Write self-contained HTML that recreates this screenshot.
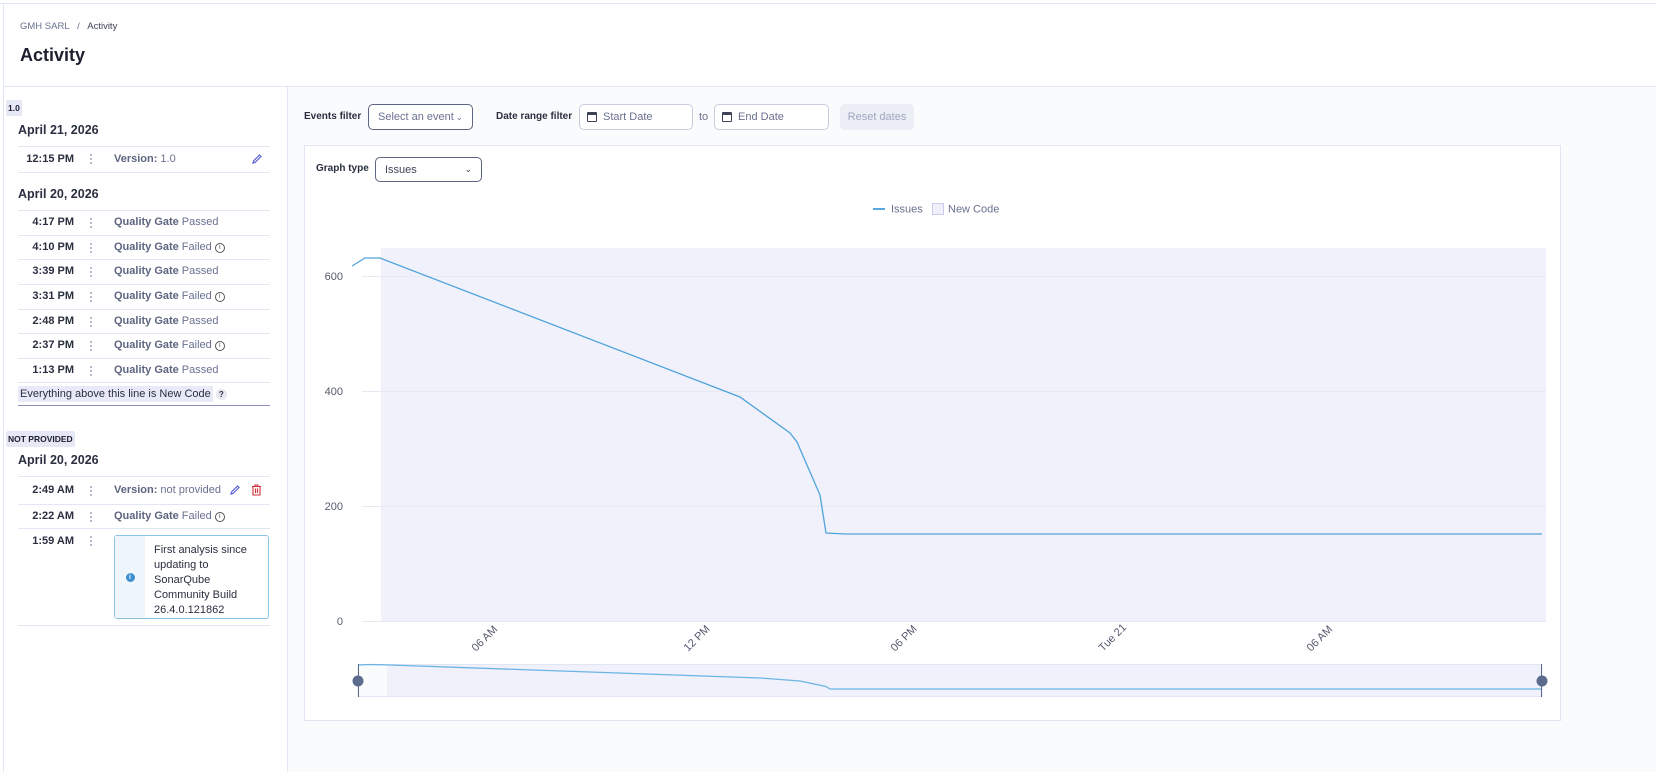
<!DOCTYPE html>
<html><head><meta charset="utf-8"><style>
*{box-sizing:border-box;margin:0;padding:0}
body{width:1656px;height:772px;overflow:hidden;background:#fff;font-family:"Liberation Sans",sans-serif;color:#3e4357;position:relative}
.topline{position:absolute;left:0;top:3px;width:1656px;height:1px;background:#e1e6f3}
.leftline{position:absolute;left:3px;top:3px;width:1px;height:769px;background:#e1e6f3}
.crumb{position:absolute;left:20px;top:21px;font-size:9.5px;color:#6a7190}
.crumb b{font-weight:normal;color:#3e4357}
h1{position:absolute;left:20px;top:45px;font-size:18px;font-weight:bold;color:#1c1f2e}
.hline{position:absolute;left:3px;top:86px;width:1653px;height:1px;background:#e1e6f3}
.right{position:absolute;left:287px;top:87px;width:1369px;height:685px;background:#fafbfc;border-left:1px solid #e1e6f3}
.tag{position:absolute;font-size:8.5px;font-weight:bold;background:#e6e8f5;color:#1c1f2e;padding:3px 2px;border-radius:2px}
.date{position:absolute;left:18px;font-size:12.5px;font-weight:bold;color:#2a2f40}
.row{position:absolute;left:18px;width:252px;height:25px;border-top:1px solid #e1e6f3;font-size:11px;line-height:13px}
.row .t{position:absolute;right:196px;top:5px;font-weight:bold;color:#2a2f40;white-space:nowrap}
.row .d{position:absolute;left:72px;top:6px;width:2px;height:12px;background:radial-gradient(circle,#a0a6c0 0.9px,transparent 1.1px) 0 0/2px 4px repeat-y}
.row .x{position:absolute;left:96px;top:5px;color:#6a7190;white-space:nowrap;display:flex;align-items:center}
.row .x b{color:#5d6580;margin-right:3px}
.ic{display:inline-block;width:10px;height:10px;border:1px solid #555;border-radius:50%;font-size:7px;text-align:center;line-height:8px;margin-left:3px;color:#555}
.lbl{position:absolute;font-size:10px;font-weight:bold;color:#2a2f40}
.sel{position:absolute;border:1px solid #5d6580;border-radius:5px;background:#fff;font-size:11px;color:#3e4357;padding:0 9px;display:flex;align-items:center;justify-content:space-between}
.inp{position:absolute;border:1px solid #c8cde0;border-radius:5px;background:#fff;font-size:11px;color:#6a7190;display:flex;align-items:center;padding-left:7px;gap:6px}
.cal{width:10px;height:10px;border:1.3px solid #3e4357;border-radius:1px;border-top-width:3px}
</style></head><body>
<div class="topline"></div><div class="leftline"></div>
<div class="crumb">GMH SARL &nbsp;&nbsp;/&nbsp;&nbsp; <b>Activity</b></div>
<h1>Activity</h1>
<div class="hline"></div>

<div class="tag" style="left:6px;top:100px">1.0</div>
<div class="date" style="top:123px">April 21, 2026</div>
<div class="row" style="top:146px;height:27px;border-bottom:1px solid #e1e6f3"><span class="t" style="top:6px">12:15 PM</span><span class="d"></span><span class="x" style="top:6px"><b>Version:</b> 1.0</span>
<svg style="position:absolute;left:233px;top:6px" width="12" height="12" viewBox="0 0 12 12"><path d="M2 10 L2.5 8 L8.5 2 L10 3.5 L4 9.5 Z" fill="none" stroke="#5b5fd6" stroke-width="1.2"/></svg></div>
<div class="date" style="top:187px">April 20, 2026</div>
<div class="row" style="top:210px"><span class="t">4:17 PM</span><span class="d"></span><span class="x"><b>Quality Gate</b> Passed</span></div>
<div class="row" style="top:235px"><span class="t">4:10 PM</span><span class="d"></span><span class="x"><b>Quality Gate</b> Failed <span class="ic">i</span></span></div>
<div class="row" style="top:259px"><span class="t">3:39 PM</span><span class="d"></span><span class="x"><b>Quality Gate</b> Passed</span></div>
<div class="row" style="top:284px"><span class="t">3:31 PM</span><span class="d"></span><span class="x"><b>Quality Gate</b> Failed <span class="ic">i</span></span></div>
<div class="row" style="top:309px"><span class="t">2:48 PM</span><span class="d"></span><span class="x"><b>Quality Gate</b> Passed</span></div>
<div class="row" style="top:333px"><span class="t">2:37 PM</span><span class="d"></span><span class="x"><b>Quality Gate</b> Failed <span class="ic">i</span></span></div>
<div class="row" style="top:358px;height:25px;border-bottom:1px solid #e1e6f3"><span class="t">1:13 PM</span><span class="d"></span><span class="x"><b>Quality Gate</b> Passed</span></div>
<div style="position:absolute;left:18px;top:388px;width:252px;height:18px;border-bottom:1px solid #8a90c0;font-size:11px;color:#2a2f40"><span style="background:#e8eaf8;padding:2px 2px">Everything above this line is New Code</span> <span style="display:inline-block;width:11px;height:11px;border-radius:50%;background:#e6e8f0;font-size:8px;font-weight:bold;text-align:center;line-height:11px">?</span></div>

<div class="tag" style="left:6px;top:431px">NOT PROVIDED</div>
<div class="date" style="top:453px">April 20, 2026</div>
<div class="row" style="top:476px;height:28px"><span class="t" style="top:7px">2:49 AM</span><span class="d" style="top:8px"></span><span class="x" style="top:7px"><b>Version:</b> not provided</span>
<svg style="position:absolute;left:211px;top:7px" width="12" height="12" viewBox="0 0 12 12"><path d="M2 10 L2.5 8 L8.5 2 L10 3.5 L4 9.5 Z" fill="none" stroke="#5b5fd6" stroke-width="1.2"/></svg>
<svg style="position:absolute;left:233px;top:7px" width="11" height="12" viewBox="0 0 11 12"><path d="M1 2.5 H10 M4 2.5 V1 H7 V2.5 M2 2.5 V11 H9 V2.5 M4.5 4.5 V9 M6.5 4.5 V9" fill="none" stroke="#d02f3a" stroke-width="1.1"/></svg></div>
<div class="row" style="top:504px"><span class="t">2:22 AM</span><span class="d"></span><span class="x"><b>Quality Gate</b> Failed <span class="ic">i</span></span></div>
<div class="row" style="top:528px;height:98px;border-bottom:1px solid #e1e6f3"><span class="t" style="top:6px">1:59 AM</span><span class="d"></span>
<div style="position:absolute;left:96px;top:6px;width:155px;height:84px;border:1px solid #8cc4e8;border-radius:3px;background:#fff;display:flex">
<div style="flex:none;width:30px;background:#eef6fc;display:flex;align-items:center;justify-content:center"><span style="width:9px;height:9px;border-radius:50%;background:#3b8fd0;color:#fff;font-size:7px;font-weight:bold;text-align:center;line-height:9px">i</span></div>
<div style="padding:7px 14px 0 9px;font-size:11px;line-height:15px;color:#2a2f40">First analysis since updating to SonarQube Community Build 26.4.0.121862</div></div></div>

<div class="right"></div>
<div class="lbl" style="left:304px;top:111px">Events filter</div>
<div class="sel" style="left:368px;top:104px;width:105px;height:26px;color:#6a7190">Select an event <span style="font-size:9px">⌄</span></div>
<div class="lbl" style="left:496px;top:111px">Date range filter</div>
<div class="inp" style="left:579px;top:104px;width:114px;height:26px"><span class="cal"></span>Start Date</div>
<div style="position:absolute;left:699px;top:111px;font-size:11px;color:#6a7190">to</div>
<div class="inp" style="left:714px;top:104px;width:115px;height:26px"><span class="cal"></span>End Date</div>
<div style="position:absolute;left:840px;top:104px;width:74px;height:26px;border-radius:5px;background:#eceef5;font-size:11px;color:#a0a6c0;text-align:center;line-height:26px">Reset dates</div>

<div style="position:absolute;left:304px;top:145px;width:1257px;height:576px;background:#fff;border:1px solid #e1e6f3"></div>
<div class="lbl" style="left:316px;top:163px">Graph type</div>
<div class="sel" style="left:375px;top:157px;width:107px;height:25px">Issues <span style="font-size:9px">⌄</span></div>

<svg style="position:absolute;left:0;top:0" width="1656" height="772" font-family="Liberation Sans, sans-serif">
<line x1="873" y1="209" x2="885" y2="209" stroke="#5aa9de" stroke-width="2"/>
<text x="891" y="212.5" font-size="11" fill="#6a7190">Issues</text>
<rect x="932.5" y="203.5" width="11" height="11" fill="#eff0fa" stroke="#c8ccef"/>
<text x="948" y="212.5" font-size="11" fill="#6a7190">New Code</text>
<rect x="381" y="248" width="1165" height="373" fill="#f0f1fa"/>
<g stroke="#e6e8f2" stroke-width="1"><line x1="362" y1="276.5" x2="1546" y2="276.5"/><line x1="362" y1="391.5" x2="1546" y2="391.5"/><line x1="362" y1="506.5" x2="1546" y2="506.5"/><line x1="362" y1="621.5" x2="1546" y2="621.5"/></g>
<g font-size="11" fill="#555a6e" text-anchor="end"><text x="343" y="280">600</text><text x="343" y="395">400</text><text x="343" y="510">200</text><text x="343" y="625">0</text></g>
<polyline points="352,266 365,258 380,258 740,397 790,433 797,442 820,495 826,533 845,534 1542,534" fill="none" stroke="#4fa3dc" stroke-width="1.3"/>
<g font-size="11" fill="#555a6e">
<text transform="translate(476,652) rotate(-45)">06 AM</text>
<text transform="translate(688,652) rotate(-45)">12 PM</text>
<text transform="translate(895,652) rotate(-45)">06 PM</text>
<text transform="translate(1103,652) rotate(-45)">Tue 21</text>
<text transform="translate(1311,652) rotate(-45)">06 AM</text></g>
<rect x="358" y="664.5" width="1184" height="32" fill="#fafbfd" stroke="#e1e6f3"/>
<rect x="387" y="665" width="1155" height="31" fill="#f0f1fa"/>
<polyline points="358,665 370,664.5 390,665 760,678 800,681 826,686.5 830,689 1542,689" fill="none" stroke="#6cb4e4" stroke-width="1.3"/>
<line x1="358.5" y1="664" x2="358.5" y2="697" stroke="#5d6b8d"/><line x1="1541.5" y1="664" x2="1541.5" y2="697" stroke="#5d6b8d"/>
<circle cx="358" cy="681" r="5.5" fill="#5d6b8d"/><circle cx="1542" cy="681" r="5.5" fill="#5d6b8d"/>
</svg>
</body></html>
